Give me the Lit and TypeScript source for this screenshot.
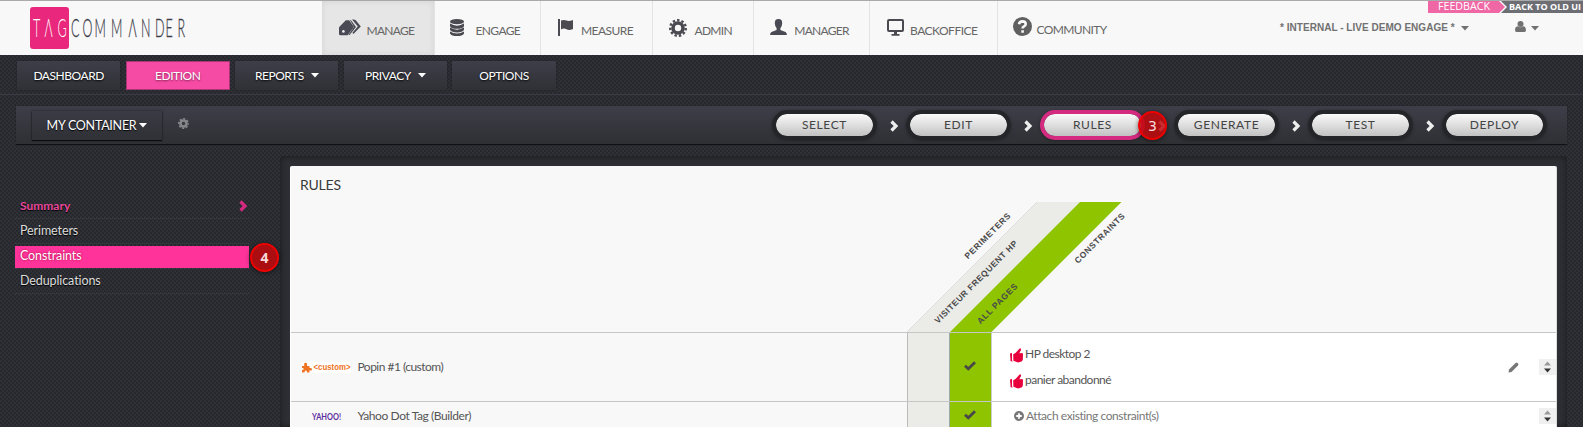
import { LitElement, html, css } from "lit";
import { customElement } from "lit/decorators.js";

const chevron = html`<svg class="chev" width="9" height="12" viewBox="0 0 9 12"><path d="M1.5 1.5L6 6L1.5 10.5" fill="none" stroke="currentColor" stroke-width="3.2"/></svg>`;
const caret = html`<svg class="caret" width="8" height="5" viewBox="0 0 8 5"><path d="M0 0H8L4 4.5Z" fill="currentColor"/></svg>`;
const gear = (s: number) => html`<svg width=${s} height=${s} viewBox="0 0 18 18"><circle cx="9" cy="9" r="5" fill="none" stroke="currentColor" stroke-width="3.6"/><circle cx="9" cy="9" r="7.8" fill="none" stroke="currentColor" stroke-width="2.4" stroke-dasharray="2.4 2.05"/></svg>`;
const smallGear = html`<svg width="11" height="11" viewBox="0 0 12 12"><circle cx="6" cy="6" r="3.3" fill="none" stroke="currentColor" stroke-width="2.8"/><circle cx="6" cy="6" r="5" fill="none" stroke="currentColor" stroke-width="2" stroke-dasharray="2.2 1.73" stroke-dashoffset="1"/></svg>`;
const check = html`<svg width="12" height="10" viewBox="0 0 12 10"><path d="M1 4.8L4.3 7.8L11 1.3" fill="none" stroke="#484848" stroke-width="2.8"/></svg>`;
const thumb = html`<svg class="thumb" width="13" height="15" viewBox="0 0 13 15"><path d="M0 5.5L2 5V12L2.6 13.5L.6 13.2Z M3.2 6.3L5.5 5L9.3 .8L10.8 .2L11 2L9.3 5.3L12.5 5L13 6.5L12.8 12L11.5 13.5L8 14.5L3.4 12.8Z" fill="#e8003d"/></svg>`;

const icons = {
  tags: html`<svg width="22" height="17" viewBox="0 0 22 17"><path d="M0 8.2L6.8 1.2H10.2L15 8L8.6 16.3H1.4Q0 16.3 0 15Z" fill="#4a4a55"/><circle cx="4.4" cy="12.4" r="1.3" fill="#f0f0f0"/><path d="M10.8 .8Q12 1 12.6 1.9L17 8L10.6 16H9.3L15 8ZM14.5 .4Q16 .4 17 1.6L21.8 7.4L14.4 15L13.4 13.8L18.8 7.6L13 .6Z" fill="#4a4a55"/></svg>`,
  db: html`<svg width="14" height="17" viewBox="0 0 14 17"><g fill="#4a4a50"><ellipse cx="7" cy="2.7" rx="7" ry="2.6"/><path d="M0 4.6Q7 8.8 14 4.6V7.2Q12.5 9.8 7 9.8T0 7.2Z"/><path d="M0 8.6Q7 12.8 14 8.6V10.8Q12.5 13.4 7 13.4T0 10.8Z"/><path d="M0 12.4Q7 16.4 14 12.4V14.4Q12.5 17 7 17T0 14.4Z"/></g></svg>`,
  flag: html`<svg width="15" height="17" viewBox="0 0 15 17"><path d="M0 0H2V17H0ZM3 1.6Q6 .4 8.4 1.6T15 1V10Q11 11.8 8.5 10.3T3 10.4Z" fill="#4a4a50"/></svg>`,
  gear: html`<span class="dark">${gear(18)}</span>`,
  person: html`<svg width="17" height="16" viewBox="0 0 17 16"><path d="M8.5 0Q12.4 0 12.2 4.4Q12 7.5 10.4 9.2V11L15.5 13Q16.8 13.6 16.9 16H.1Q.2 13.6 1.5 13L6.6 11V9.2Q5 7.5 4.8 4.4Q4.6 0 8.5 0Z" fill="#4a4a55"/></svg>`,
  screen: html`<svg width="17" height="17" viewBox="0 0 17 17"><rect x="1" y="1" width="15" height="11" rx="1" fill="none" stroke="#4a4a50" stroke-width="2"/><path d="M7 13H10V15H12.5V16.8H4.5V15H7Z" fill="#4a4a50"/></svg>`,
  help: html`<svg width="19" height="19" viewBox="0 0 19 19"><circle cx="9.5" cy="9.5" r="9.5" fill="#606060"/><path d="M6 7.3Q6.4 4.4 9.5 4.4Q12.7 4.5 12.7 7Q12.7 8.6 11 9.4Q9.6 10.1 9.6 11.4M9.6 13.2V15.8" fill="none" stroke="#f8f8f8" stroke-width="2.6"/></svg>`,
};

@customElement("app-root")
export class AppRoot extends LitElement {
  static styles = css`
    :host { display: block; height: 427px; overflow: hidden; font-family: Lato, sans-serif; font-size: 12px; color: #555;
      background-color: #2d2e33; background-image: repeating-conic-gradient(#27282d 0 25%, #303137 0 50%); background-size: 4px 4px; }
    * { box-sizing: border-box; }
    svg { display: block; flex: none; overflow: visible; }
    .top { height: 55px; background: #f8f8f8; border-top: 1px solid #a9a9a9; display: flex; }
    .brand { width: 322px; padding: 6px 0 0 30px; flex: none; }
    .nav { display: flex; flex: none; }
    .tab { display: flex; height: 54px; border-right: 1px solid #e3e3e3; color: #666; font-size: 12px; line-height: 16px; padding-top: 18px; }
    .tab.on { background: #e6e6e6; box-shadow: inset 0 0 6px #d2d2d2; }
    .tab:last-child { border: 0; }
    .lbl { padding-top: 4px; white-space: nowrap; }
    .lbl.up { padding-top: 3px; }
    .ico { flex: none; }
    .ico.up { margin-top: -2px; }
    .dark { color: #4a4a50; }
    .right { margin-left: auto; width: 303px; }
    .ribbon { display: flex; justify-content: flex-end; height: 12px; }
    .account { display: flex; align-items: center; padding-top: 9px; font: bold 10px/12px "Liberation Sans", sans-serif; color: #717171; }
    .acct { width: 176px; white-space: nowrap; letter-spacing: .03px; }
    .account .caret { margin-left: 5px; }
    .account .user { margin: -3px 0 0 46px; }
    .sub { display: flex; gap: 5.3px; padding: 6px 17px 0; height: 40px; border-bottom: 1px solid #3a3b45; }
    .btn { width: 103.3px; height: 29px; display: flex; align-items: center; justify-content: center; gap: 7px; color: #fff; letter-spacing: -.45px; background: linear-gradient(#3d3e48, #303136); box-shadow: 0 0 2px #202125; text-shadow: 0 1px 2px #000; border-radius: 1px; }
    .btn.pink { background: #f64ba4; width: 104.3px; box-shadow: 0 0 0 1px #a83674 inset; text-shadow: 0 1px 2px #7a2350; }
    .bar { margin: 11px 16px 0; height: 39px; display: flex; align-items: center; background: linear-gradient(#3d3e48, #2f3034); border-bottom: 1px solid #101114; box-shadow: 0 0 1px #191a1d; padding: 0 20px 0 16px; color: #fff; }
    .cont { width: 130px; height: 29px; display: flex; align-items: center; justify-content: center; gap: 3px; font-size: 12.5px; letter-spacing: -.25px; background: linear-gradient(#3a3b44, #303136); box-shadow: 0 1px 1px #0c0c0e, 0 0 2px #202125; text-shadow: 0 1px 1px #000; }
    .cog { color: #85868a; margin: -3px 0 0 16px; }
    .steps { margin-left: auto; display: flex; align-items: center; height: 38px; }
    .pill { width: 105px; height: 30px; border: 4px solid #242529; border-radius: 15px; background: linear-gradient(#fafafa, #c2c2c2) padding-box; display: flex; align-items: center; justify-content: center; color: #444; letter-spacing: .6px; padding-bottom: 1px; box-shadow: 0 1px 3px #232428; }
    .pill.hot { border-color: #d42a80; }
    .gap { width: 29px; padding: 2px 0 0 13px; color: #eee; position: relative; }
    .badge { position: absolute; width: 29px; height: 29px; border-radius: 50%; border: 2px solid #ed0000; background: #c2080cd9; color: #f6dada; display: flex; align-items: center; justify-content: center; box-shadow: 0 1px 5px #0008; text-shadow: none; }
    .b3 { left: -7px; top: -7px; font: 14px "DejaVu Sans", sans-serif; }
    .b4 { left: 235px; top: -3px; font: bold 14px "Noto Sans", sans-serif; }
    .main { display: flex; padding-top: 11px; height: 282px; }
    .side { width: 280px; padding: 38px 0 0 15px; flex: none; }
    .link { position: relative; width: 234px; height: 25px; padding: 4px 1px 0 5px; line-height: 15px; font-size: 12.5px; letter-spacing: -.1px; color: #ddd; border-bottom: 1px dotted #3d3e46; display: flex; justify-content: space-between; text-shadow: 0 1px 1px #000; }
    .link.cur { color: #e8489c; font-weight: bold; font-size: 12px; letter-spacing: 0; }
    .link.cur .chev { color: #d42a80; margin-top: 2px; }
    .link.sel { background: #ff339a; background-clip: padding-box; margin-top: 2px; height: 23px; padding-top: 2px; color: #fff; text-shadow: 0 0 2px #903; }
    .frame { width: 1287px; border-radius: 4px 4px 0 0; background: #2e2f34; box-shadow: inset 0 0 7px #17181b; padding: 10px; }
    .panel { width: 1267px; height: 272px; background: #f8f8f8; border-radius: 2px 2px 0 0; border-left: 1px solid #fff; border-right: 1px solid #ddd; overflow: hidden; }
    .head { height: 166px; display: grid; grid-template-columns: 600px 1fr; }
    .title { font-size: 14px; letter-spacing: -.2px; color: #3a3a3a; padding: 10px 9px; line-height: 17px; }
    .slant { font: bold 8.5px "Liberation Sans", sans-serif; fill: #4a4a4a; margin-top: 36px; }
    .row { display: grid; grid-template-columns: 616px 42px 42px 1fr 31px 17px; border-top: 1px solid #c6c6c6; height: 69px; align-items: stretch; background: #fff; }
    .row.short { height: 29px; }
    .row > * { display: flex; align-items: center; letter-spacing: -.52px; }
    .row > .name { background: #f8f8f8; padding: 0 0 1px 10px; }
    .short > * { letter-spacing: -.41px; }
    .logo { width: 56.5px; flex: none; display: flex; align-items: center; letter-spacing: 0; padding-top: 2px; }
    .g { background: #ebece8; border-left: 1px solid #bbb; }
    .ok { background: #8fc400; border-left: 1px solid #9aa; justify-content: center; padding: 0 1px 2px 0; }
    .cons { border-left: 1px solid #ccc; }
    .list { padding-left: 18px; display: flex; flex-direction: column; gap: 10px; }
    .item { display: flex; align-items: center; gap: 2px; line-height: 16px; height: 16px; }
    .thumb { margin-top: 2px; }
    .add { color: #777; padding-left: 4px; gap: 2px; letter-spacing: -.43px; }
    .sort { width: 17px; height: 16px; background: #f0f0f0; display: flex; justify-content: center; align-items: center; }
  `;

  tab(icon: keyof typeof icons, text: string, w: number, left: number, textLeft: number, ls = 0) {
    const up = icon === "help" ? "up" : "";
    return html`<div class="tab ${icon === "tags" ? "on" : ""}" style="width:${w}px;padding-left:${left}px">
      <div class="ico ${up}" style="width:${textLeft - left}px">${icons[icon]}</div><div class="lbl ${up}" style="letter-spacing:${ls}px">${text}</div></div>`;
  }

  sorter() {
    return html`<div><div class="sort"><svg width="9" height="12" viewBox="0 0 9 12"><path d="M1 4.5L4.5 .5L8 4.5Z" fill="#999"/><path d="M1 7.5L4.5 11.5L8 7.5Z" fill="#333"/></svg></div></div>`;
  }

  render() {
    const steps = ["SELECT", "EDIT", "RULES", "GENERATE", "TEST", "DEPLOY"];
    return html`
      <div class="top">
        <div class="brand">
          <svg width="160" height="42" viewBox="0 0 160 42">
            <rect width="39" height="42" rx="3" fill="#e9277c"/>
            <g font-size="25" font-family="Lato" font-weight="300">
              <text transform="translate(0 30) scale(.5 1)" x="6 29 55" fill="#fff">TΛG</text>
              <text transform="translate(0 30) scale(.5 1)" x="82 105 129 162 197 222 250 271 295" fill="#3c3c48" stroke="#3c3c48" stroke-width=".3">COMMΛNDER</text>
            </g>
          </svg>
        </div>
        <div class="nav">
          ${this.tab("tags", "MANAGE", 113, 17, 44.5, -0.7)}
          ${this.tab("db", "ENGAGE", 106, 15, 40.4, -0.6)}
          ${this.tab("flag", "MEASURE", 112, 17, 40, -0.55)}
          ${this.tab("gear", "ADMIN", 101, 16, 41.5, -0.7)}
          ${this.tab("person", "MANAGER", 116, 16, 40.2, -0.7)}
          ${this.tab("screen", "BACKOFFICE", 128, 17, 40, -0.5)}
          ${this.tab("help", "COMMUNITY", 120, 15, 38.4, -0.6)}
        </div>
        <div class="right">
          <div class="ribbon">
            <svg width="155" height="12" viewBox="0 0 155 12">
              <path d="M0 0H71L77 6L71 12H0Z" fill="#f067a6"/><path d="M73 0H155V12H73L79 6Z" fill="#6d6e74"/>
              <text x="10" y="9.2" font-size="10" font-family="Open Sans" font-weight="500" fill="#fff" textLength="52" lengthAdjust="spacingAndGlyphs">FEEDBACK</text>
              <text x="81" y="9.2" font-size="9" font-family="Open Sans" font-weight="700" fill="#fff" textLength="72" lengthAdjust="spacingAndGlyphs">BACK TO OLD UI</text>
            </svg>
          </div>
          <div class="account"><span class="acct">* INTERNAL - LIVE DEMO ENGAGE *</span>${caret}
            <svg class="user" width="11" height="11" viewBox="0 0 11 11"><circle cx="5.5" cy="3" r="3" fill="#717171"/><path d="M0 9Q0 5.5 3 5.3Q5.5 7 8 5.3Q11 5.5 11 9Q11 11 9.5 11H1.5Q0 11 0 9Z" fill="#717171"/></svg>${caret}</div>
        </div>
      </div>
      <div class="sub">
        <div class="btn">DASHBOARD</div><div class="btn pink">EDITION</div><div class="btn">REPORTS ${caret}</div><div class="btn">PRIVACY ${caret}</div><div class="btn">OPTIONS</div>
      </div>
      <div class="bar">
        <div class="cont">MY CONTAINER ${caret}</div>
        <div class="cog">${smallGear}</div>
        <div class="steps">
          ${steps.map((s, i) => html`${i ? html`<div class="gap">${chevron}${i === 3 ? html`<div class="badge b3">3</div>` : ""}</div>` : ""}<div class="pill ${i === 2 ? "hot" : ""}">${s}</div>`)}
        </div>
      </div>
      <div class="main">
        <div class="side">
          <div class="link cur">Summary ${chevron}</div>
          <div class="link">Perimeters</div>
          <div class="link sel">Constraints<div class="badge b4">4</div></div>
          <div class="link">Deduplications</div>
        </div>
        <div class="frame"><div class="panel">
          <div class="head">
            <div class="title">RULES</div>
            <svg class="slant" width="300" height="130" viewBox="891 202 300 130">
              <path d="M907 332L1037 202H1080L950 332Z" fill="#ebece8"/><path d="M907 332L1037 202" stroke="#ddd"/>
              <path d="M950 332L1080 202H1121.5L991.5 332Z" fill="#8fc400"/>
              <text transform="translate(968 259.5) rotate(-45)" textLength="61">PERIMETERS</text>
              <text transform="translate(938 324) rotate(-45)" textLength="113">VISITEUR FREQUENT HP</text>
              <text transform="translate(980.5 324.5) rotate(-45)" textLength="53">ALL PAGES</text>
              <text transform="translate(1078 264) rotate(-45)" textLength="67">CONSTRAINTS</text>
            </svg>
          </div>
          <div class="row">
            <div class="name"><div class="logo"><svg width="50" height="12" viewBox="0 0 50 12"><rect width="50" height="11" fill="#fff"/><path d="M1 4H3.4Q2.4 1 4.5 .8T6 4H8.5V6Q11.5 5.5 11 7.5T8.5 8V10.5H6Q6 8.5 4.7 8.6T3.6 10.5H1V8Q3 8 2.8 7T1 6Z" fill="#ee7424"/><text x="12.5" y="8.3" font-family="Liberation Sans" font-weight="bold" font-size="8.5" fill="#ee7424" textLength="37" lengthAdjust="spacingAndGlyphs">&lt;custom&gt;</text></svg></div>Popin #1 (custom)</div>
            <div class="g"></div><div class="ok">${check}</div>
            <div class="cons"><div class="list"><div class="item">${thumb}HP desktop 2</div><div class="item">${thumb}panier abandonné</div></div></div>
            <div><svg width="11" height="11" viewBox="0 0 11 11"><path d="M.5 10.5L1 7.5L7.5 1L9 .5L10.5 2L10 3.5L3.5 10Z" fill="#777"/></svg></div>
            ${this.sorter()}
          </div>
          <div class="row short">
            <div class="name"><div class="logo"><svg width="50" height="12" viewBox="0 0 50 12"><text x="11" y="9" font-family="Lato" font-weight="bold" font-size="9" fill="#5b2c9f" textLength="29" lengthAdjust="spacingAndGlyphs">YAHOO!</text></svg></div>Yahoo Dot Tag (Builder)</div>
            <div class="g"></div><div class="ok">${check}</div>
            <div class="cons"><div class="list"><div class="item add"><svg width="10" height="10" viewBox="0 0 9 9"><circle cx="4.5" cy="4.5" r="4.5" fill="#777"/><path d="M4.5 2V7M2 4.5H7" stroke="#fff" stroke-width="1.6"/></svg>Attach existing constraint(s)</div></div></div>
            <div></div>${this.sorter()}
          </div>
        </div></div>
      </div>`;
  }
}
